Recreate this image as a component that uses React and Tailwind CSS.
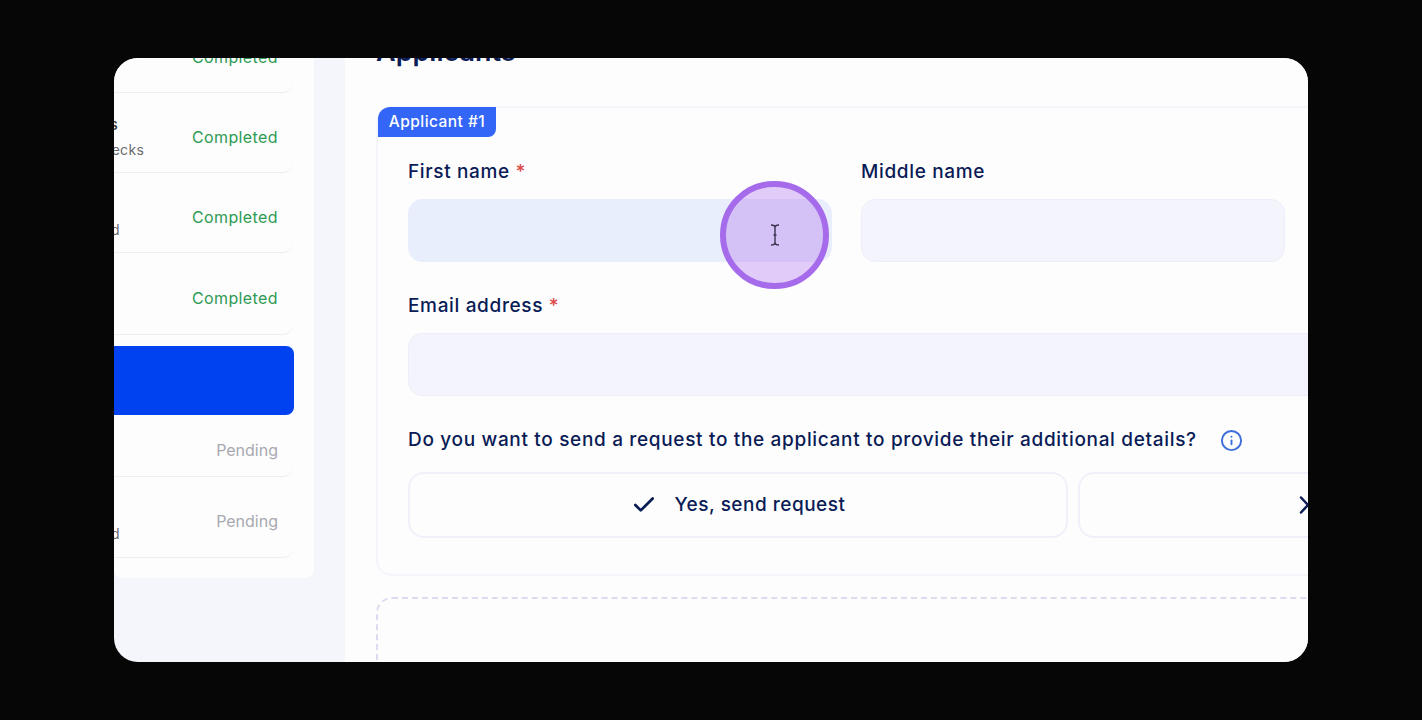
import { Check, Info } from "lucide-react";

const font = { fontFamily: '"Inter", "Liberation Sans", sans-serif' };

function Row({ status, title, sub, height }) {
  const done = status === "Completed";
  return (
    <div className={`flex items-center justify-between border-b border-[#eeeef2] rounded-br-xl pl-[94px] pr-4 pt-2 ${height}`}>
      <div className="whitespace-nowrap">
        {title && <p className="text-[15px] font-medium leading-[25px] tracking-[-0.1px] text-[#333]">{title}</p>}
        {sub && <p className="text-[14px] leading-[25px] tracking-[0.3px] text-[#6b6b70]">{sub}</p>}
      </div>
      <span className={`text-[16px] ${done ? "tracking-[0.4px] text-[#2e9a52]" : "text-[#a8a9b0]"}`}>{status}</span>
    </div>
  );
}

function Field({ label, required, active, className }) {
  return (
    <div className={className}>
      <p className="text-[19px] font-medium leading-6 tracking-[0.65px] text-[#0a1b55]">
        {label} {required && <span className="text-[#dc4a4a]">*</span>}
      </p>
      <div className={`mt-[15px] h-[63px] rounded-[14px] border ${active ? "bg-[#e8eefb] border-[#e8eefb]" : "bg-[#f4f4fc] border-[#eeeefa]"}`} />
    </div>
  );
}

export default function App() {
  return (
    <div className="h-[720px] bg-[#060606] px-[114px] py-[58px]" style={font}>
      <div className="relative flex h-[604px] overflow-hidden rounded-[24px] bg-[#f5f6fb]">
        {/* Sidebar */}
        <aside className="w-[200px] shrink-0 self-start overflow-hidden rounded-b-lg bg-[#fdfdfe] pb-5">
          <div className="-mt-[45px] -ml-[200px] w-[380px]">
            <Row status="Completed" height="h-[80px]" />
            <Row status="Completed" title="Income Checks" sub="Background checks" height="h-[80px]" />
            <Row status="Completed" title="Address" sub="Details provided" height="h-[80px]" />
            <Row status="Completed" height="h-[82px]" />
            <div className="mt-[11px] h-[69px] w-[380px] rounded-lg bg-[#0041f0]" />
            <Row status="Pending" height="h-[62px]" />
            <Row status="Pending" title="Payment" sub="Details provided" height="h-[81px]" />
          </div>
        </aside>

        {/* Main panel */}
        <main className="ml-[31px] min-w-0 flex-1 overflow-hidden bg-[#fdfdfe] pl-[31px]">
          <div className="w-[1100px]">
            <h1 className="-mt-[24px] text-[27px] font-semibold leading-9 text-[#0a1b55]">Applicants</h1>

            <section className="relative mt-[36px] h-[470px] rounded-2xl border-2 border-[#f4f5fb] pt-[52px] pl-[30px] pr-[20px]">
              <span className="absolute -top-px left-0 flex h-[30px] w-[118px] items-center justify-center rounded-tl-xl rounded-br-lg bg-[#3366f6] text-[15.5px] font-medium tracking-[0.45px] text-white">
                Applicant #1
              </span>
              <div className="grid grid-cols-[424px_424px] gap-x-[29px]">
                <Field label="First name" required active />
                <Field label="Middle name" />
              </div>
              <Field label="Email address" required className="mt-[32px]" />
              <div className="mt-[32px] flex items-center gap-[23px]">
                <p className="whitespace-nowrap text-[19px] font-medium leading-6 tracking-[0.67px] text-[#0a1b55]">
                  Do you want to send a request to the applicant to provide their additional details?
                </p>
                <Info size={23} className="shrink-0 text-[#3e6fd9]" />
              </div>
              <div className="mt-[20px] flex gap-[10px]">
                <button className="flex h-[66px] w-[660px] shrink-0 items-center justify-center gap-[18px] rounded-2xl border-2 border-[#f0f0fa] text-[19px] font-medium tracking-[0.5px] text-[#0a1b55]">
                  <Check size={26} strokeWidth={2.5} /> Yes, send request
                </button>
                <button className="flex h-[66px] w-[660px] shrink-0 items-center gap-[18px] rounded-2xl border-2 border-[#f0f0fa] pl-[219px] text-[19px] font-medium tracking-[0.5px] text-[#0a1b55]">
                  <svg width="18" height="18" viewBox="0 0 18 18" fill="none" stroke="currentColor" strokeWidth="2.5" strokeLinecap="round">
                    <path d="M2 1.5l14 15M16 1.5l-14 15" />
                  </svg>
                  No, do not send
                </button>
              </div>
            </section>

            <div className="mt-[21px] h-[200px] rounded-2xl border-2 border-dashed border-[#dcdcf0]" />
          </div>
        </main>

        {/* Cursor highlight */}
        <div className="absolute left-[606px] top-[123px] flex h-[108px] w-[109px] items-center justify-center rounded-full border-[6px] border-[#a56bea] bg-[#b77ff0]/40">
          <svg className="ml-px" width="10" height="22" viewBox="0 0 10 22" fill="none" stroke="#3b3350" strokeWidth="1.4">
            <path d="M1 1c2 0 4 .5 4 2.5v15c0 2-2 2.5-4 2.5M9 1c-2 0-4 .5-4 2.5v15c0 2 2 2.5 4 2.5M3.5 11h3" />
          </svg>
        </div>
      </div>
    </div>
  );
}
